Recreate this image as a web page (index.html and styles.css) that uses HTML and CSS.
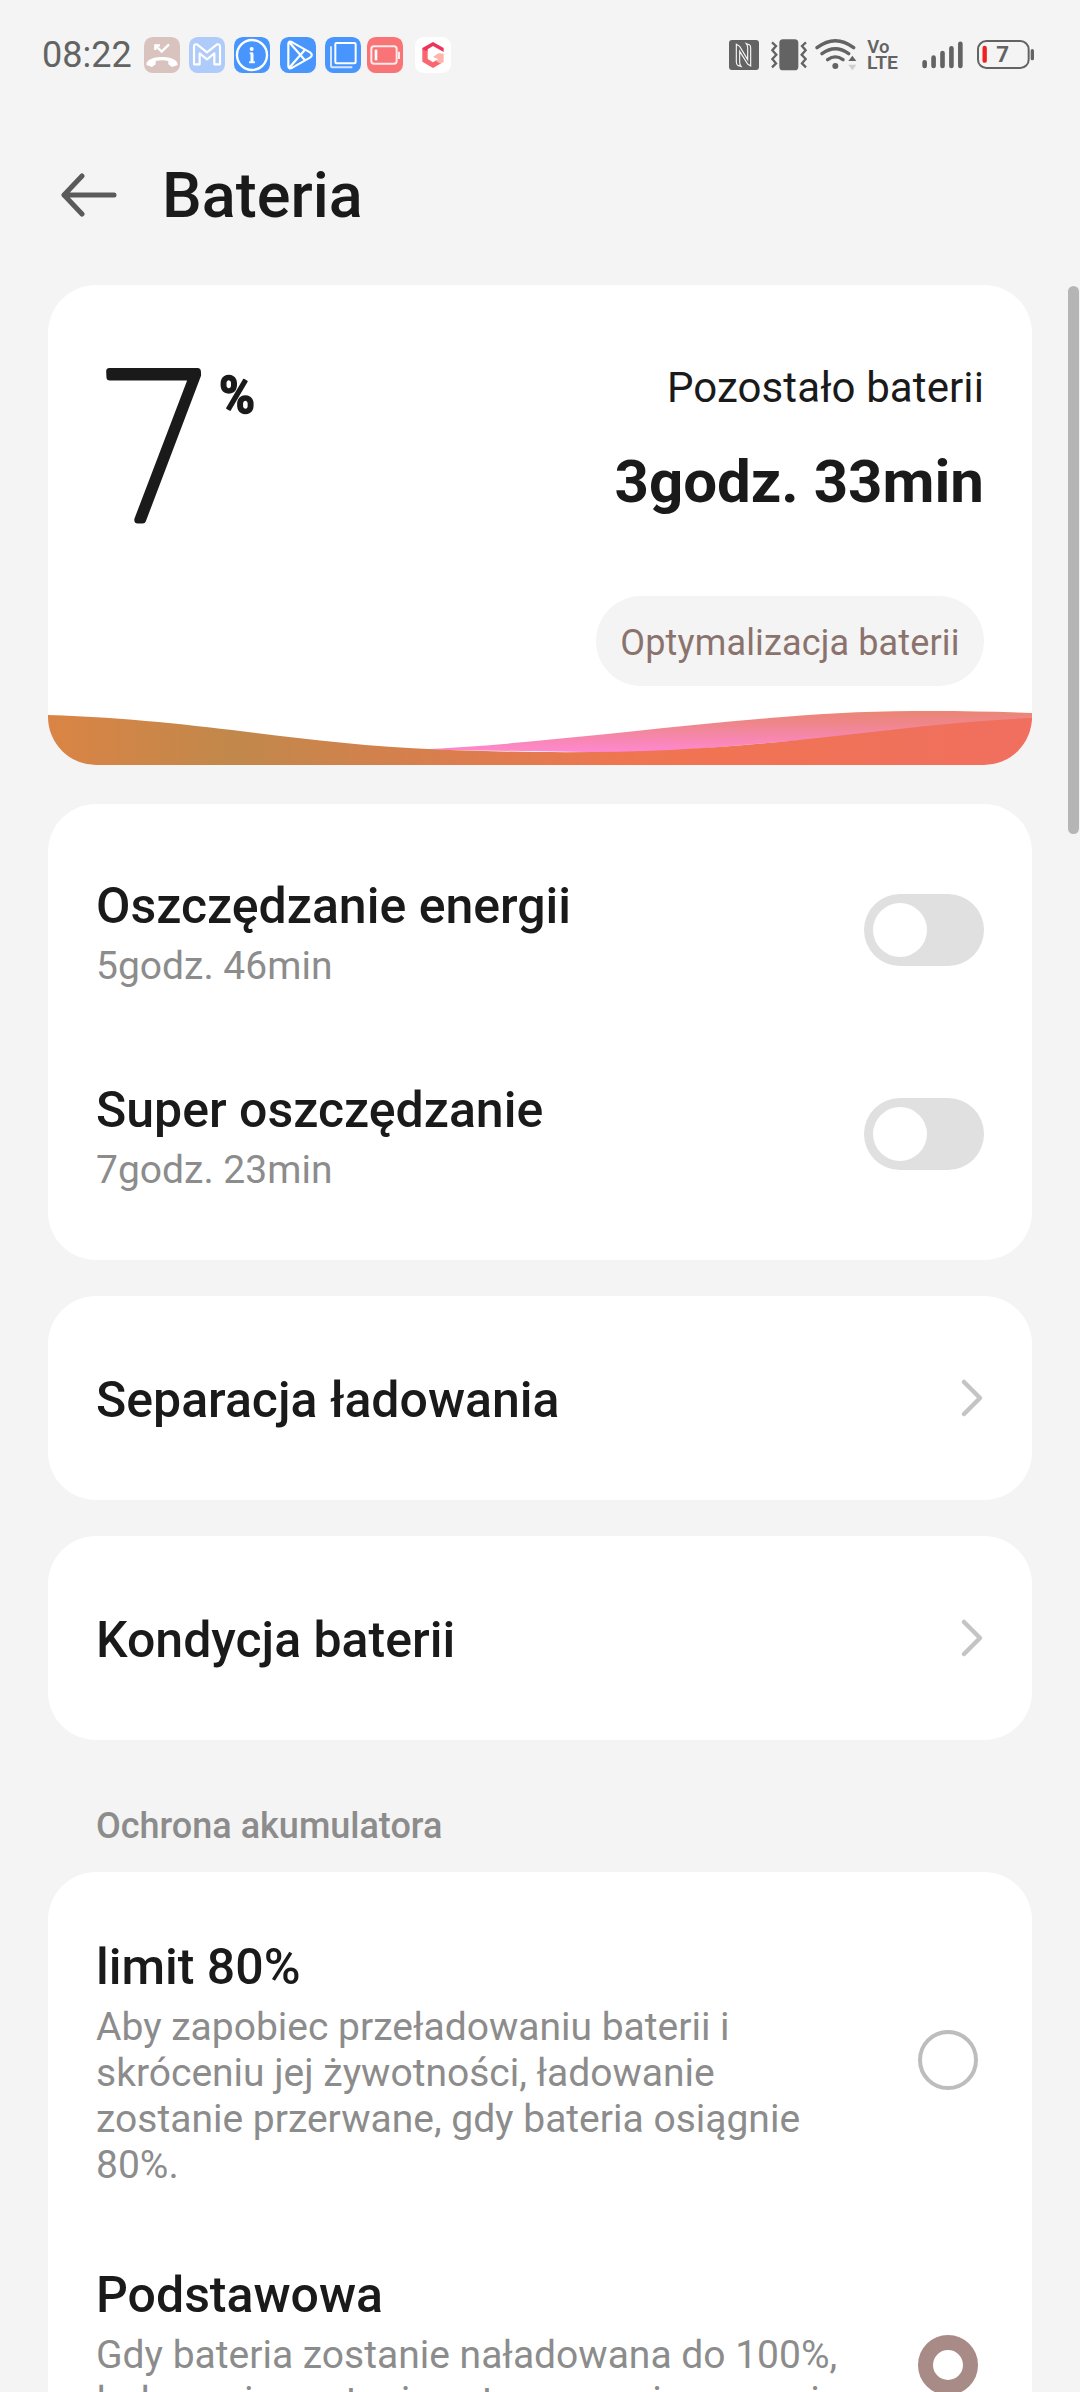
FILE: index.html
```html
<!DOCTYPE html>
<html lang="pl">
<head>
<meta charset="utf-8">
<title>Bateria</title>
<link rel="stylesheet" href="styles.css">
</head>
<body>
<div class="screen">
  <header class="status">
    <span class="clock">08:22</span>
    <div class="apps">
      <svg class="app" viewBox="0 0 108 108"><rect width="108" height="108" rx="26" fill="#d9c3be"/><path d="M7 84C5 52 103 52 101 84L84 90L73 82V72Q54 67 35 72V82L24 90Z" fill="#fff"/><path d="M34 39V25H48M36 27L53 44L75 22" fill="none" stroke="#fff" stroke-width="7"/></svg>
      <svg class="app" viewBox="0 0 108 108"><rect width="108" height="108" rx="26" fill="#aecbfa"/><path d="M15 82V30Q15 20 24 22L54 46L84 22Q93 20 93 30V82H76V49L54 67L32 49V82Z" fill="none" stroke="#fff" stroke-width="6.500" stroke-linejoin="round"/></svg>
      <svg class="app" viewBox="0 0 108 108"><rect width="108" height="108" rx="26" fill="#4896fd"/><circle cx="54" cy="54" r="45" fill="none" stroke="#fff" stroke-width="7"/><path d="M47 49H54V78M45 76H63" fill="none" stroke="#e4f0ff" stroke-width="6"/><path d="M54 49V78" stroke="#fff" stroke-width="9"/><circle cx="53" cy="36" r="6" fill="#fff"/></svg>
      <svg class="app app-play" viewBox="0 0 108 108"><rect width="108" height="108" rx="26" fill="#4896fd"/><path d="M25 21Q25 10 37 16L90 46Q101 54 90 62L37 92Q25 98 25 87ZM29 17L75 70M29 91L75 38" fill="none" stroke="#fff" stroke-width="6.500" stroke-linejoin="round"/></svg>
      <svg class="app" viewBox="0 0 108 108"><rect width="108" height="108" rx="26" fill="#4896fd"/><rect x="31" y="18" width="61" height="61" rx="4" fill="none" stroke="#fff" stroke-width="6"/><path d="M18 28V86Q18 91 24 91H82" fill="none" stroke="#d3e6ff" stroke-width="6"/></svg>
      <svg class="app app-battery" viewBox="0 0 108 108"><rect width="108" height="108" rx="26" fill="#f87476"/><rect x="13" y="28" width="76" height="52" rx="8" fill="none" stroke="#ffe9e9" stroke-width="6"/><path d="M27 38V70" stroke="#fff" stroke-width="8"/><path d="M96 44V66" stroke="#ffe9e9" stroke-width="6"/></svg>
      <svg class="app app-g" viewBox="0 0 108 108"><rect width="108" height="108" rx="26" fill="#fff"/><path d="M54 15L86 33V45L70 36L54 27L38 37V44L22 40V33Z" fill="#ed3459"/><path d="M22 36L38 44V66L54 76L64 70L80 78L54 93L22 74Z" fill="#fa6670"/><path d="M86 50V75L76 80L63 72L70 67L54 60L70 49Z" fill="#fbb5aa"/></svg>
    </div>
    <div class="system">
      <svg class="nfc" viewBox="87 51 90 108"><rect x="87" y="60" width="90" height="90" rx="9" fill="#636363"/><path d="M109 73L119 79L143 119V84Q143 76 139 71L149 75Q152 77 152 84V138L143 132L119 94V126Q119 134 123 139L113 136Q109 134 109 126Z" fill="none" stroke="#f4f4f4" stroke-width="3.500"/></svg>
      <svg class="vibrate" viewBox="213 51 108 108"><g fill="none" stroke="#636363" stroke-width="7"><path d="M216 67L228 78L217 91L229 104L217 117L228 130L216 142M318 67L306 78L317 91L305 104L317 117L306 130L318 142"/></g><rect x="238" y="58" width="57" height="93" rx="11" fill="#636363"/></svg>
      <svg class="wifi" viewBox="344 51 126 108"><g fill="none" stroke="#636363" stroke-width="10" stroke-linecap="round"><path d="M350 83Q405 41 460 83M365 101Q405 71 445 101M382 119Q405 102 428 119"/></g><circle cx="405" cy="138" r="9" fill="#636363"/><path d="M444 123L456 107L468 123Z" fill="#636363"/><path d="M444 134H468L456 151Z" fill="#cfcfcf"/></svg>
      <svg class="volte" viewBox="500 51 94 108"><text x="501" y="98" textLength="67" lengthAdjust="spacingAndGlyphs">Vo</text><text x="500" y="147" textLength="94" lengthAdjust="spacingAndGlyphs">LTE</text></svg>
      <svg class="signal" viewBox="666 51 124 108"><g stroke="#636363" stroke-width="14" stroke-linecap="round"><path d="M674 127V138M701 113V138M728 99V138M755 85V138M782 71V138"/></g></svg>
      <svg class="cell" viewBox="831 51 171 108"><rect x="834" y="63" width="152" height="81" rx="25" fill="none" stroke="#636363" stroke-width="6"/><path d="M854 84V122" stroke="#f02020" stroke-width="13" stroke-linecap="round"/><path d="M997 92V116" stroke="#636363" stroke-width="10" stroke-linecap="round"/><text x="889" y="126">7</text></svg>
    </div>
  </header>

  <div class="titlebar">
    <svg class="back" viewBox="0 0 56 44"><path d="M3 22H53M21 3L3 22L21 41" fill="none" stroke="#5a5a5a" stroke-width="5" stroke-linecap="round" stroke-linejoin="round"/></svg>
    <h1>Bateria</h1>
  </div>

  <main class="content">
    <section class="card summary">
      <div class="summary-body">
        <svg class="level" viewBox="0 0 170 170"><text class="level-digit" x="0" y="157" transform="matrix(.93 0 .04 1 5.8 0)">7</text><text class="level-percent" x="123" y="50" textLength="36" lengthAdjust="spacingAndGlyphs">%</text></svg>
        <div class="remaining">
          <div class="remaining-label">Pozostało baterii</div>
          <div class="remaining-time">3godz. 33min</div>
          <div class="optimize">Optymalizacja baterii</div>
        </div>
      </div>
      <svg class="wave" viewBox="0 0 984 54">
        <defs>
          <linearGradient id="back" x1="0" y1="0" x2="0" y2="1"><stop offset="0" stop-color="#ea8674"/><stop offset="0.35" stop-color="#f08690"/><stop offset="1" stop-color="#ff88d4"/></linearGradient>
          <linearGradient id="front"><stop offset="0" stop-color="#da8445"/><stop offset="0.19" stop-color="#c1884b"/><stop offset="0.6" stop-color="#f07551"/><stop offset="1" stop-color="#f06f5f"/></linearGradient>
        </defs>
        <path d="M370 38.500C480 34 600 17 735 6C815 -1 900 -1 984 2V10L600 42Z" fill="url(#back)"/>
        <path d="M0 4C155 9 250 33 390 38.500C480 42 550 42 622 39C765 32 865 12 984 7V54H0Z" fill="url(#front)"/>
      </svg>
    </section>

    <section class="card modes">
      <div class="row">
        <div class="text"><div class="name">Oszczędzanie energii</div><div class="sub">5godz. 46min</div></div>
        <span class="switch"></span>
      </div>
      <div class="row">
        <div class="text"><div class="name">Super oszczędzanie</div><div class="sub">7godz. 23min</div></div>
        <span class="switch"></span>
      </div>
    </section>

    <section class="card link">
      <div class="name">Separacja ładowania</div>
      <svg class="chevron" viewBox="0 0 24 40"><path d="M4 4L20 20L4 36" fill="none" stroke="#c4c4c4" stroke-width="4.500" stroke-linecap="round" stroke-linejoin="round"/></svg>
    </section>

    <section class="card link">
      <div class="name">Kondycja baterii</div>
      <svg class="chevron" viewBox="0 0 24 40"><path d="M4 4L20 20L4 36" fill="none" stroke="#c4c4c4" stroke-width="4.500" stroke-linecap="round" stroke-linejoin="round"/></svg>
    </section>

    <h2>Ochrona akumulatora</h2>

    <section class="card options">
      <div class="option">
        <div class="text"><div class="name">limit 80%</div><div class="sub">Aby zapobiec przeładowaniu baterii i<br>skróceniu jej żywotności, ładowanie<br>zostanie przerwane, gdy bateria osiągnie<br>80%.</div></div>
        <span class="radio"></span>
      </div>
      <div class="option">
        <div class="text"><div class="name">Podstawowa</div><div class="sub">Gdy bateria zostanie naładowana do 100%,<br>ładowanie zostanie zatrzymane i ponownie</div></div>
        <span class="radio radio-on"></span>
      </div>
    </section>
  </main>
  <div class="scrollbar"></div>
</div>
</body>
</html>
```
FILE: styles.css
```css
* { box-sizing: border-box; }

html, body { margin: 0; padding: 0; }

body {
  background: #f4f4f4;
  font-family: Roboto, "Noto Sans", sans-serif;
  color: #1a1a1a;
}

.screen {
  position: relative;
  width: 1080px;
  height: 2392px;
  overflow: hidden;
}

svg { display: block; flex: none; }

.status {
  height: 110px;
  padding: 0 46px 0 42px;
  display: flex;
  align-items: center;
  color: #636363;
}
.clock { width: 102px; font-size: 36px; line-height: 40px; }
.apps { display: flex; gap: 9px; }
.app { width: 36px; height: 36px; }
.app-play { margin-left: 1px; }
.app-battery { margin-left: -3px; }
.app-g { margin-left: 3px; }

.system { display: flex; align-items: center; margin-left: auto; }
.system svg { height: 36px; }
.nfc { width: 30px; margin-right: 12px; }
.vibrate { width: 36px; margin-right: 8px; }
.wifi { width: 42px; margin-right: 10px; }
.volte { width: 31px; margin-right: 24px; }
.volte text { font-size: 53px; font-weight: 600; fill: #636363; }
.signal { width: 41px; margin-right: 14px; }
.cell { width: 57px; }
.cell text { font-size: 67px; font-weight: 700; fill: #636363; }

.titlebar {
  height: 175px;
  padding: 0 0 4px 61px;
  display: flex;
  align-items: center;
}
.back { width: 56px; height: 44px; margin-right: 45px; margin-bottom: 1px; }
h1 { margin: 0; font-size: 63px; font-weight: 500; line-height: 74px; }

.content { padding: 0 48px; }
.card { background: #fff; border-radius: 48px; }

.summary {
  height: 480px;
  overflow: hidden;
  display: flex;
  flex-direction: column;
  justify-content: space-between;
}
.summary-body {
  padding: 78px 48px 0;
  display: flex;
  justify-content: space-between;
}
.level { width: 170px; height: 170px; overflow: visible; }
.level text { fill: #1a1a1a; stroke: #1a1a1a; stroke-linejoin: round; }
.level-digit { font-size: 209px; font-weight: 100; stroke-width: 7px; }
.level-percent { font-size: 52px; font-weight: 700; stroke-width: 1.5px; }

.remaining { display: flex; flex-direction: column; align-items: flex-end; }
.remaining-label { font-size: 42px; letter-spacing: 0.1px; line-height: 50px; }
.remaining-time { font-size: 60px; font-weight: 700; line-height: 70px; margin-top: 34px; }
.optimize {
  width: 388px;
  height: 90px;
  margin-top: 79px;
  border-radius: 45px;
  background: #f4f4f4;
  color: #8b736d;
  font-size: 36px;
  letter-spacing: 0.15px;
  line-height: 94px;
  text-align: center;
}
.wave { width: 984px; height: 54px; }

.modes { margin-top: 39px; padding: 24px 0; }
.row {
  height: 204px;
  padding: 0 48px;
  display: flex;
  align-items: center;
  justify-content: space-between;
}
.text { padding-top: 6px; }
.name { font-size: 50px; font-weight: 500; line-height: 58px; }
.sub { font-size: 39px; line-height: 46px; color: #8c8c8c; margin-top: 8px; }
.switch {
  width: 120px;
  height: 72px;
  padding: 9px;
  border-radius: 36px;
  background: #e0e0e0;
}
.switch::before {
  content: "";
  display: block;
  width: 54px;
  height: 54px;
  border-radius: 50%;
  background: #fff;
}

.link {
  margin-top: 36px;
  height: 204px;
  padding: 4px 48px 0;
  display: flex;
  align-items: center;
  justify-content: space-between;
}
.chevron { width: 24px; height: 40px; margin-bottom: 4px; }

h2 {
  margin: 65px 48px 24px;
  font-size: 36px;
  font-weight: 500;
  line-height: 43px;
  color: #8c8c8c;
}

.options { height: 900px; padding: 60px 54px 0 48px; }
.option {
  min-height: 210px;
  display: flex;
  align-items: center;
  justify-content: space-between;
  margin-bottom: 72px;
}
.option .text { align-self: flex-start; }
.radio {
  width: 60px;
  height: 60px;
  border: 4px solid #bdbdbd;
  border-radius: 50%;
}
.radio-on { border: 15px solid #a88b86; }

.scrollbar {
  position: absolute;
  left: 1068px;
  top: 286px;
  width: 11px;
  height: 548px;
  border-radius: 6px;
  background: #b5b5b5;
}
```
